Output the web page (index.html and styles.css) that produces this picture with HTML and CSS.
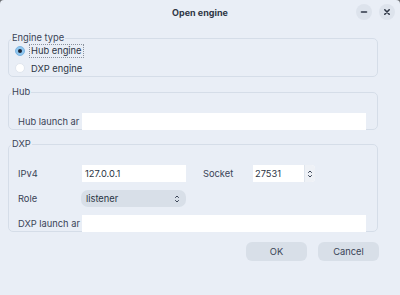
FILE: index.html
```html
<!DOCTYPE html>
<html>

<head>
    <meta charset="UTF-8">
    <title>Open engine</title>
    <link rel="stylesheet" href="styles.css">
</head>

<body>
    <div class="window">
        <div class="titlebar">
            <span class="title">Open engine</span>
            <div class="win-buttons">
                <span class="win-btn">
                    <svg width="8" height="8" viewBox="0 0 8 8"><path d="M1.5 4h5" stroke="#2e3645" stroke-width="1.6" stroke-linecap="round"/></svg>
                </span>
                <span class="win-btn">
                    <svg width="8" height="8" viewBox="0 0 8 8"><path d="M1.8 1.8l4.4 4.4M6.2 1.8l-4.4 4.4" stroke="#2e3645" stroke-width="1.6" stroke-linecap="round"/></svg>
                </span>
            </div>
        </div>

        <div class="content">
            <fieldset class="group engine">
                <legend>Engine type</legend>
                <label class="radio checked"><span class="dot"></span><span class="focus">Hub engine</span></label>
                <label class="radio"><span class="dot"></span><span class="plain">DXP engine</span></label>
            </fieldset>

            <fieldset class="group hub">
                <legend>Hub</legend>
                <div class="row last">
                    <span class="lbl">Hub launch ar</span>
                    <span class="field long"></span>
                </div>
            </fieldset>

            <fieldset class="group dxp">
                <legend>DXP</legend>
                <div class="row">
                    <span class="lbl">IPv4</span>
                    <span class="field short">127.0.0.1</span>
                    <span class="lbl socket">Socket</span>
                    <span class="spin">
                        <span class="spin-text">27531</span>
                        <span class="spin-arrows">
                            <svg width="6" height="10" viewBox="0 0 6 10"><path d="M1.2 3.8L3 2 4.8 3.8" fill="none" stroke="#3a4456" stroke-width="1"/><path d="M1.2 6.2L3 8 4.8 6.2" fill="none" stroke="#3a4456" stroke-width="1"/></svg>
                        </span>
                    </span>
                </div>
                <div class="row">
                    <span class="lbl">Role</span>
                    <span class="combo">
                        <span>listener</span>
                        <svg width="6" height="10" viewBox="0 0 6 10"><path d="M1.2 3.8L3 2 4.8 3.8" fill="none" stroke="#3a4456" stroke-width="1"/><path d="M1.2 6.2L3 8 4.8 6.2" fill="none" stroke="#3a4456" stroke-width="1"/></svg>
                    </span>
                </div>
                <div class="row last">
                    <span class="lbl">DXP launch ar</span>
                    <span class="field long"></span>
                </div>
            </fieldset>

            <div class="actions">
                <button class="btn">OK</button>
                <button class="btn">Cancel</button>
            </div>
        </div>
    </div>
</body>

</html>
```

FILE: styles.css
```css
body {
    margin: 0;
    background: #6b6e73;
    font-family: Inter, "Noto Sans", sans-serif;
    font-size: 9.3px;
    color: #3a4456;
}

.window {
    width: 400px;
    height: 295px;
    background: #e9eef6;
    border-radius: 4px 4px 0 0;
    overflow: hidden;
}

.titlebar {
    height: 24px;
    display: flex;
    align-items: center;
    justify-content: center;
    position: relative;
}

.title {
    font-weight: bold;
    font-size: 9px;
    color: #2e3645;
}

.win-buttons {
    position: absolute;
    right: 5px;
    top: 4px;
    display: flex;
    gap: 7px;
}

.win-btn {
    width: 16px;
    height: 16px;
    border-radius: 50%;
    background: #dde3ec;
    display: flex;
    align-items: center;
    justify-content: center;
}

.content {
    padding: 8px 22px 0 8px;
}

.group {
    margin: 0;
    padding: 0;
    border: 1px solid #d5dde8;
    border-radius: 5px;
    min-width: 0;
}

.group legend {
    margin-left: 2px;
    padding: 0 1px;
    line-height: 12px;
    color: #3a4456;
}

.hub {
    margin-top: 9px;
}

.dxp {
    margin-top: 8px;
}

.radio {
    display: flex;
    align-items: center;
    height: 16px;
    margin-left: 6px;
    color: #2b3444;
}

.engine .radio:first-of-type {
    margin-top: -1px;
    margin-bottom: 1px;
}

.dot {
    width: 10px;
    height: 10px;
    box-sizing: border-box;
    border-radius: 50%;
    background: #fff;
    border: 1px solid #e0e6ee;
    margin-right: 4px;
    display: flex;
    align-items: center;
    justify-content: center;
}

.checked .dot {
    background: #8fc6ef;
    border-color: #7fb6e2;
}

.checked .dot::after {
    content: "";
    width: 4px;
    height: 4px;
    border-radius: 50%;
    background: #1d2636;
}

.focus {
    border: 1px dotted #8a929e;
    padding: 0 1px;
    line-height: 12px;
}

.plain {
    padding: 0 2px;
}

.row {
    display: flex;
    align-items: center;
    height: 17px;
    margin-top: 8px;
    padding-left: 9px;
}

.hub .row,
.dxp .row:first-of-type {
    margin-top: 15px;
}

.row.last {
    margin-bottom: -1px;
}

.lbl {
    width: 64px;
    flex-shrink: 0;
    white-space: nowrap;
}

.field {
    height: 17px;
    background: #fff;
    color: #2b3444;
    line-height: 17px;
    padding-left: 3px;
    box-sizing: border-box;
}

.field.short {
    width: 104px;
}

.field.long {
    width: 284px;
}

.lbl.socket {
    width: 50px;
    margin-left: 17px;
}

.spin {
    width: 62px;
    height: 17px;
    display: flex;
    background: #fff;
    border-radius: 0 4px 4px 0;
    overflow: hidden;
}

.spin-text {
    flex: 1;
    line-height: 17px;
    padding-left: 2px;
    color: #2b3444;
}

.spin-arrows {
    width: 10px;
    display: flex;
    align-items: center;
    justify-content: center;
    background: #eef1f6;
    border-left: 1px solid #dfe5ed;
}

.combo {
    width: 105px;
    height: 17px;
    margin-left: -1px;
    box-sizing: border-box;
    border-radius: 7px;
    background: #d8dfe8;
    display: flex;
    align-items: center;
    justify-content: space-between;
    padding: 0 6px 0 5px;
    color: #2b3444;
}

.actions {
    display: flex;
    justify-content: flex-end;
    gap: 11px;
    margin-top: 10px;
    margin-right: -1px;
}

.btn {
    width: 61px;
    height: 19px;
    border: none;
    border-radius: 6px;
    background: #d8dfe8;
    font-family: Inter, "Noto Sans", sans-serif;
    font-size: 9.3px;
    color: #3a4456;
    padding: 0;
}
```
